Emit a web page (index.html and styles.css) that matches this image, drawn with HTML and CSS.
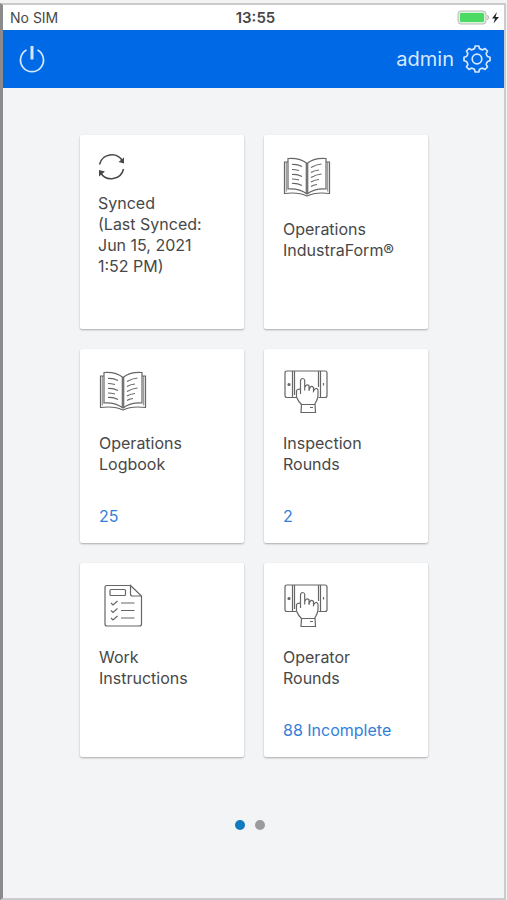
FILE: index.html
```html
<!DOCTYPE html>
<html lang="en">
<head>
<meta charset="utf-8">
<meta name="viewport" content="width=device-width, initial-scale=1">
<title>Home</title>
<link rel="stylesheet" href="styles.css">
</head>
<body>
<svg class="sprite" aria-hidden="true">
  <symbol id="book" viewBox="0 0 48 44">
    <path d="M5 7H1.500V38.500C10 37.500 17 37.500 24 41C31 37.500 38 37.500 46.500 38.500V7H43"/>
    <path d="M3.300 7V36.500M44.700 7V36.500" stroke-width=".8"/>
    <path d="M5 3.500C12 3 18 3.500 24 8.500C30 3.500 36 3 43 3.500V34C36 33.500 30 34.500 24 39C18 34.500 12 33.500 5 34ZM23.300 8.500V39M24.700 8.500V39"/>
    <path d="M9 9.500Q14 9 19 11.500M9 14.500Q12 14.500 16 15.500M9 19.500Q14 19 19 21.500M9 24Q12 24 16 25M9 28.500Q14 28 19 30.500M28 12.500Q33 9.500 38.500 9M28 17.500Q31 15.500 36 15M28 22.500Q33 19.500 38.500 19M28 27Q31 25 36 24.500M28 31.500Q30 30 34 29.500"/>
  </symbol>
  <symbol id="tablet" viewBox="0 0 44 46">
    <path d="M12.500 28.500H3Q1 28.500 1 26.500V4Q1 2 3 2H41Q43 2 43 4V26.500Q43 28.500 41 28.500H34.500M8.500 2V28.500M10.500 2V26M34.500 2V18M36.500 2V28.500"/>
    <path d="M12.500 26V21.500Q14 19.500 16.500 20.500V11.500Q17 9.500 18.700 9.500Q20.500 9.500 20.700 11.500V18.500Q22.500 14.500 25 16.500V21Q26.500 15.500 29.500 18.500V22Q32 17.500 34 21V26Q34 30 30.500 35.500H17.500Q14 32 13 29Q12 27 12.500 26ZM16.500 20V25M20.700 15V21.500M25 16.500V22M29.500 18.500V23"/>
    <path d="M17.500 35.500H31L31.500 43.500H17ZM26 38.500H29"/>
    <circle cx="5" cy="15.500" r="1" fill="currentColor"/>
    <path d="M39.500 14V16.500"/>
  </symbol>
</svg>
<div class="screen">
  <div class="status">
    <span>No SIM</span>
    <span class="time">13:55</span>
    <svg class="battery" viewBox="0 0 44 16" role="img" aria-label="Battery charging">
      <rect x="1" y="1" width="28" height="13" rx="3" fill="#d8f5dc" stroke="#b9bcb9"/>
      <rect x="3" y="3" width="24" height="9" rx="1" fill="#4cd964"/>
      <path d="M30.500 5Q33 7.500 30.500 10" fill="#b9bcb9" stroke="#b9bcb9"/>
      <path d="M40 2L35 8.500H38L36.500 13.500L42 7H38.500Z" fill="#222"/>
    </svg>
  </div>
  <header class="bar">
    <button class="icon-button" aria-label="Log out">
      <svg viewBox="0 0 28 28" width="28" height="28">
        <path d="M8.500 5A11.500 11.500 0 1 0 19.500 5" stroke-width="1.700"/>
        <path d="M14 1V14.500" stroke-width="3"/>
      </svg>
    </button>
    <button class="icon-button account">
      <span>admin</span>
      <svg viewBox="-14 -14 28 28" width="28" height="28" stroke-width="1.700" stroke-linejoin="round">
        <path d="M-2.500-10.500L-1.800-13H1.800L2.500-10.500Q4-9.300 5.700-9.200L8-10.500L10.500-8L9.200-5.700Q9.300-4 10.500-2.500L13-1.800V1.800L10.500 2.500Q9.300 4 9.200 5.700L10.500 8L8 10.500L5.700 9.200Q4 9.300 2.500 10.500L1.800 13H-1.800L-2.500 10.500Q-4 9.300-5.700 9.200L-8 10.500L-10.500 8L-9.200 5.700Q-9.300 4-10.500 2.500L-13 1.800V-1.800L-10.500-2.500Q-9.300-4-9.200-5.700L-10.500-8L-8-10.500L-5.700-9.200Q-4-9.300-2.500-10.500Z"/>
        <circle r="4.800"/>
      </svg>
    </button>
  </header>
  <main>
    <div class="cards">
      <a class="card sync" href="#">
        <svg viewBox="0 0 28 28" width="28" height="28" stroke-width="1.500">
          <path d="M1.500 11.500A12.500 12.500 0 0 1 24.500 8M25.500 16A12.500 12.500 0 0 1 2.500 19.500"/>
          <path d="M26 4.500V10.500L20.500 9ZM1 23.500V17L7 18.500Z" fill="currentColor" stroke="none"/>
        </svg>
        <span class="title">Synced<br>(Last Synced:<br>Jun 15, 2021<br>1:52 PM)</span>
      </a>
      <a class="card" href="#">
        <svg class="art"><use href="#book"/></svg>
        <span class="title">Operations<br>IndustraForm®</span>
      </a>
      <a class="card" href="#">
        <svg class="art"><use href="#book"/></svg>
        <span class="title">Operations<br>Logbook</span>
        <span class="count">25</span>
      </a>
      <a class="card" href="#">
        <svg class="art device"><use href="#tablet"/></svg>
        <span class="title">Inspection<br>Rounds</span>
        <span class="count">2</span>
      </a>
      <a class="card" href="#">
        <svg class="art" viewBox="0 0 48 44">
          <path d="M31.500 2.500H8Q6 2.500 6 4.500V41Q6 43 8 43H40.500Q42.500 43 42.500 41V13L31.500 2.500V11Q31.500 13 33.500 13H42.500"/>
          <rect x="11" y="6.500" width="15.500" height="6" rx="1"/>
          <path d="M12 20L14 22L18.500 18M12 27.500L14 29.500L18.500 25.500M12 35L14 37L18.500 33M22 20H35.500M22 27.500H35.500M22 35H35.500"/>
        </svg>
        <span class="title">Work<br>Instructions</span>
      </a>
      <a class="card" href="#">
        <svg class="art device"><use href="#tablet"/></svg>
        <span class="title">Operator<br>Rounds</span>
        <span class="count">88 Incomplete</span>
      </a>
    </div>
    <nav class="pages" aria-label="Pages">
      <button class="dot active" aria-label="Page 1"></button>
      <button class="dot" aria-label="Page 2"></button>
    </nav>
  </main>
</div>
</body>
</html>
```
FILE: styles.css
```css
* {
  box-sizing: border-box;
}

body {
  margin: 0;
  padding-top: 3px;
  min-height: 100vh;
  display: flex;
  background: #f3f3f4;
  color: #484848;
  font: 16px/21px Inter, "Liberation Sans", sans-serif;
}

svg {
  display: block;
  fill: none;
  stroke: currentColor;
  flex: none;
}

.sprite {
  position: absolute;
  width: 0;
  height: 0;
}

.screen {
  flex: 1;
  display: flex;
  flex-direction: column;
  margin-right: 1px;
  border: 2px solid #cbcbcd;
  border-left: 3px solid #8b8b8b;
  background: #f3f4f6;
}

.status {
  display: grid;
  grid-template-columns: 1fr auto 1fr;
  align-items: center;
  height: 25px;
  padding: 0 3px 0 7px;
  background: #fff;
  font-size: 14px;
}

.time {
  font-size: 15px;
  font-weight: 600;
}

.battery {
  width: 44px;
  height: 16px;
  justify-self: end;
  stroke: none;
}

.bar {
  display: flex;
  justify-content: space-between;
  align-items: center;
  height: 58px;
  padding: 0 13px 0 15px;
  background: #0069e5;
}

.icon-button {
  display: flex;
  align-items: center;
  gap: 9px;
  padding: 0;
  border: 0;
  background: none;
  color: #d6e8ff;
  font: inherit;
}

.account {
  font-size: 20px;
}

main {
  padding: 47px 76px 0 77px;
}

.cards {
  display: grid;
  grid-template-columns: 1fr 1fr;
  grid-auto-rows: minmax(194px, auto);
  gap: 20px;
}

.card {
  display: flex;
  flex-direction: column;
  align-items: flex-start;
  padding: 20px 18px 16px 19px;
  border-radius: 2px;
  background: #fff;
  box-shadow: 0 1px 2px rgba(0, 0, 0, 0.3);
  color: inherit;
  text-decoration: none;
}

.art {
  width: 48px;
  height: 44px;
  margin-bottom: 20px;
  color: #666;
  stroke-width: 1.2;
}

.device {
  margin-left: 1px;
  width: 44px;
  height: 46px;
  margin-bottom: 18px;
}

.sync {
  padding-top: 18px;
  padding-left: 18px;
}

.sync svg {
  margin-bottom: 12px;
}

.count {
  margin-top: auto;
  color: #3480d8;
}

.pages {
  display: flex;
  justify-content: center;
  gap: 10px;
  padding: 63px 8px 20px 0;
}

.dot {
  width: 10px;
  height: 10px;
  padding: 0;
  border: 0;
  border-radius: 50%;
  background: #9b9b9d;
}

.active {
  background: #107bbd;
}
```
